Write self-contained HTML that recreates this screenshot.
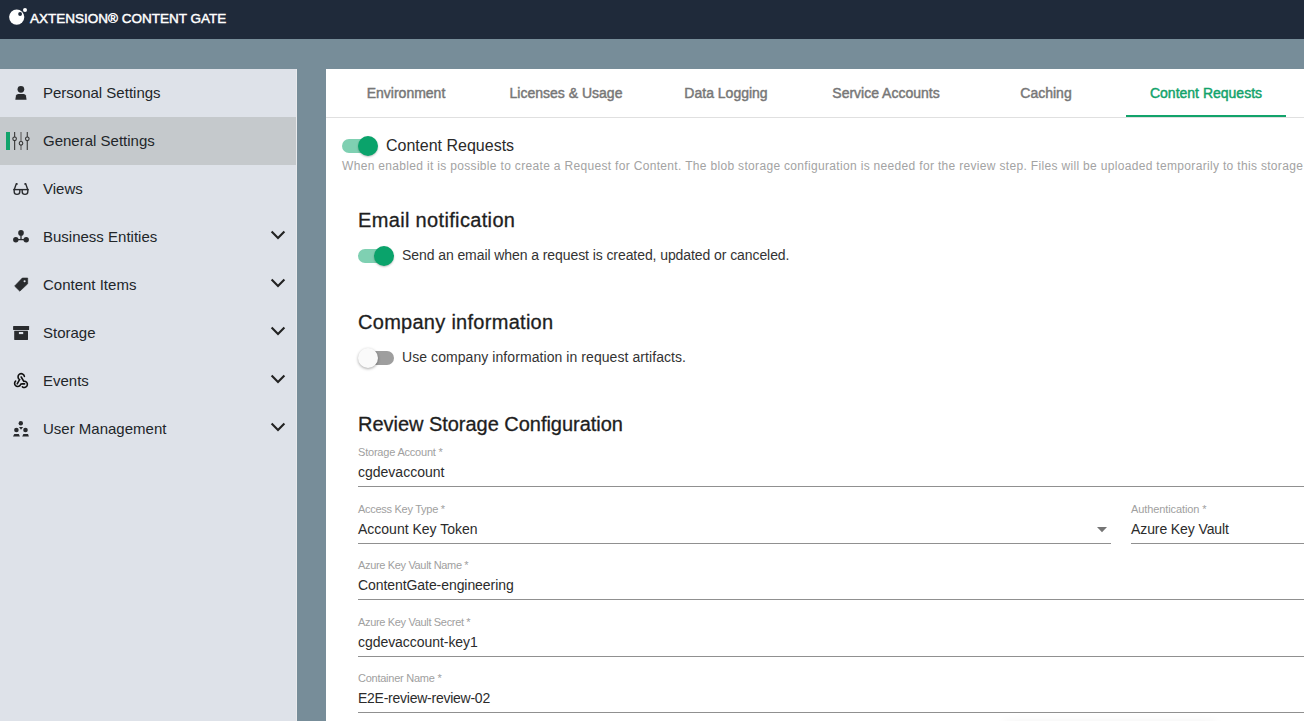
<!DOCTYPE html>
<html><head><meta charset="utf-8">
<style>
*{box-sizing:border-box;margin:0;padding:0}
html,body{width:1304px;height:721px;overflow:hidden;background:#778d99;font-family:"Liberation Sans",sans-serif}
.a{position:absolute;white-space:nowrap;line-height:1}
.b{position:absolute}
</style></head><body>
<div class="b" style="left:0;top:0;width:1304px;height:39px;background:#1f2a3a"></div>
<svg class="b" style="left:0;top:0" width="40" height="39" viewBox="0 0 40 39">
<circle cx="16.7" cy="17.1" r="7.6" fill="#fff"/><circle cx="20.1" cy="14" r="1.9" fill="#1f2a3a"/><circle cx="25" cy="9.9" r="2" fill="#fff"/></svg>
<div class="a" style="left:30px;top:11.97px;font-size:13.5px;color:#fff;-webkit-text-stroke:0.45px #fff">AXTENSION® CONTENT GATE</div>
<div class="b" style="left:0;top:69px;width:296px;height:652px;background:#dee2e9"></div>
<div class="b" style="left:296px;top:69px;width:1px;height:652px;background:#e9eaec"></div>
<div class="b" style="left:0;top:117px;width:296px;height:48px;background:#c5c9cc"></div>
<div class="b" style="left:6px;top:132px;width:4px;height:18px;background:#12a36b"></div>
<div class="a" style="left:43px;top:85.30px;font-size:15px;color:#22262a">Personal Settings</div>
<div class="a" style="left:43px;top:133.30px;font-size:15px;color:#22262a">General Settings</div>
<div class="a" style="left:43px;top:181.30px;font-size:15px;color:#22262a">Views</div>
<div class="a" style="left:43px;top:229.30px;font-size:15px;color:#22262a">Business Entities</div>
<div class="a" style="left:43px;top:277.30px;font-size:15px;color:#22262a">Content Items</div>
<div class="a" style="left:43px;top:325.30px;font-size:15px;color:#22262a">Storage</div>
<div class="a" style="left:43px;top:373.30px;font-size:15px;color:#22262a">Events</div>
<div class="a" style="left:43px;top:421.30px;font-size:15px;color:#22262a">User Management</div>
<svg class="b" style="left:268px;top:227px" width="20" height="16" viewBox="0 0 20 16"><path d="M3.6 4.6 L10 11 L16.4 4.6" fill="none" stroke="#222" stroke-width="2.1"/></svg>
<svg class="b" style="left:268px;top:275px" width="20" height="16" viewBox="0 0 20 16"><path d="M3.6 4.6 L10 11 L16.4 4.6" fill="none" stroke="#222" stroke-width="2.1"/></svg>
<svg class="b" style="left:268px;top:323px" width="20" height="16" viewBox="0 0 20 16"><path d="M3.6 4.6 L10 11 L16.4 4.6" fill="none" stroke="#222" stroke-width="2.1"/></svg>
<svg class="b" style="left:268px;top:371px" width="20" height="16" viewBox="0 0 20 16"><path d="M3.6 4.6 L10 11 L16.4 4.6" fill="none" stroke="#222" stroke-width="2.1"/></svg>
<svg class="b" style="left:268px;top:419px" width="20" height="16" viewBox="0 0 20 16"><path d="M3.6 4.6 L10 11 L16.4 4.6" fill="none" stroke="#222" stroke-width="2.1"/></svg>
<svg class="b" style="left:0;top:69px" width="40" height="380" viewBox="0 69 40 380">
<circle cx="20.9" cy="89.3" r="3.35" fill="#292b2e"/>
<path d="M15.3 99.8 L16 95.6 Q16.4 94 18.3 94 L23.6 94 Q25.4 94 25.9 95.6 L26.6 99.8 Z" fill="#292b2e"/>
<g stroke="#444" stroke-width="1.2" fill="none">
<line x1="14.6" y1="132" x2="14.6" y2="150"/><line x1="21" y1="132" x2="21" y2="150" stroke="#666"/><line x1="27.3" y1="132" x2="27.3" y2="150"/>
</g>
<g stroke="#333" stroke-width="1.1" fill="#c9cdd0">
<circle cx="14.6" cy="138.8" r="1.8"/><circle cx="21" cy="143.3" r="1.8"/><circle cx="27.3" cy="138.8" r="1.8"/>
</g>
<g fill="none" stroke="#292b2e" stroke-width="1.4" stroke-linejoin="round">
<path d="M13.2 189.6 H28.8"/>
<path d="M14.2 189.6 V191.8 Q14.2 194.4 17 194.4 Q19.8 194.4 19.8 191.8 V189.6"/>
<path d="M22.2 189.6 V191.8 Q22.2 194.4 25 194.4 Q27.8 194.4 27.8 191.8 V189.6"/>
<path d="M14.3 189.6 L16.4 183.6 L17.6 184.4"/>
<path d="M27.7 189.6 L25.6 183.6 L24.4 184.4"/>
</g>
<g fill="#292b2e">
<circle cx="21" cy="232.9" r="2.8"/><circle cx="15.8" cy="239.7" r="2.7"/><circle cx="26.2" cy="239.7" r="2.7"/>
</g>
<path d="M21 233 V239.7 M15.8 239.7 H26.2" stroke="#292b2e" stroke-width="1.3"/>
<path d="M22.3 278 L27.7 278 L27.7 283.8 L19.8 291.2 L14.6 286.1 Z" fill="#292b2e" stroke="#292b2e" stroke-width="0.6" stroke-linejoin="round"/>
<circle cx="24.6" cy="281.3" r="1.05" fill="#dee2e9"/>
<rect x="13.1" y="326" width="16" height="4" rx="0.5" fill="#292b2e"/>
<rect x="14.2" y="330.8" width="13.8" height="9.2" rx="0.4" fill="#292b2e"/>
<rect x="18.9" y="332" width="4.3" height="2.1" fill="#dee2e9"/>
<g fill="none" stroke="#111" stroke-width="1.6" stroke-linecap="round">
<path d="M24.4 376.4 A3.2 3.2 0 1 0 19.6 379.6 L17.2 383.9"/>
<path d="M21.2 377 L23.8 381.3 A3.1 3.1 0 1 1 22.4 386.8"/>
<path d="M15.6 381.1 A3.1 3.1 0 1 0 19.9 385.7 Q20.5 383.9 22 383.9 L24.6 383.9"/>
</g>
<g fill="#292b2e">
<circle cx="20.8" cy="423.3" r="2.2"/>
<path d="M19 427.1 L23.1 427.1 L21 429.7 Z"/>
<circle cx="16.4" cy="430" r="2.3"/><circle cx="25.5" cy="430" r="2.3"/>
<path d="M14.3 434.1 L18.8 434.1 L19.9 436.6 L13 436.6 Z"/>
<path d="M23.4 434.1 L28 434.1 L28.9 436.6 L22.2 436.6 Z"/>
</g>
</svg>
<div class="b" style="left:326px;top:69px;width:978px;height:652px;background:#fff"></div>
<div class="b" style="left:326px;top:117px;width:978px;height:1px;background:#e0e0e0"></div>
<div class="b" style="left:1126px;top:115px;width:160px;height:2px;background:#12a36b"></div>
<div class="a" style="left:326px;width:160px;text-align:center;top:86.15px;font-size:14px;color:#777;-webkit-text-stroke:0.45px #777">Environment</div>
<div class="a" style="left:486px;width:160px;text-align:center;top:86.15px;font-size:14px;color:#777;-webkit-text-stroke:0.45px #777">Licenses &amp; Usage</div>
<div class="a" style="left:646px;width:160px;text-align:center;top:86.15px;font-size:14px;color:#777;-webkit-text-stroke:0.45px #777">Data Logging</div>
<div class="a" style="left:806px;width:160px;text-align:center;top:86.15px;font-size:14px;color:#777;-webkit-text-stroke:0.45px #777">Service Accounts</div>
<div class="a" style="left:966px;width:160px;text-align:center;top:86.15px;font-size:14px;color:#777;-webkit-text-stroke:0.45px #777">Caching</div>
<div class="a" style="left:1126px;width:160px;text-align:center;top:86.15px;font-size:14px;color:#12a36b;-webkit-text-stroke:0.45px #12a36b">Content Requests</div>
<div class="b" style="left:342px;top:139px;width:34px;height:14px;border-radius:7px;background:#7fd0b2"></div>
<div class="b" style="left:358px;top:136px;width:20px;height:20px;border-radius:50%;background:#0aa36b;box-shadow:0 1px 2px rgba(0,0,0,.25)"></div>
<div class="a" style="left:386px;top:137.66px;font-size:16px;color:#2a2a2a">Content Requests</div>
<div class="a" style="left:342px;top:160.34px;font-size:12px;color:#a3a3a3;letter-spacing:0.325px">When enabled it is possible to create a Request for Content. The blob storage configuration is needed for the review step. Files will be uploaded temporarily to this storage account.</div>
<div class="a" style="left:358px;top:210.27px;font-size:20px;color:#1e1e1e;letter-spacing:0.34px;-webkit-text-stroke:0.3px #1e1e1e">Email notification</div>
<div class="b" style="left:358px;top:249px;width:34px;height:14px;border-radius:7px;background:#7fd0b2"></div>
<div class="b" style="left:374px;top:246px;width:20px;height:20px;border-radius:50%;background:#0aa36b;box-shadow:0 1px 2px rgba(0,0,0,.25)"></div>
<div class="a" style="left:402px;top:248.05px;font-size:14px;color:#333;letter-spacing:-0.08px">Send an email when a request is created, updated or canceled.</div>
<div class="a" style="left:358px;top:312.27px;font-size:20px;color:#1e1e1e;letter-spacing:0.28px;-webkit-text-stroke:0.3px #1e1e1e">Company information</div>
<div class="b" style="left:360px;top:351px;width:34px;height:14px;border-radius:7px;background:#9e9e9e"></div>
<div class="b" style="left:358px;top:348px;width:20px;height:20px;border-radius:50%;background:#fafafa;box-shadow:0 1px 3px rgba(0,0,0,.35)"></div>
<div class="a" style="left:402px;top:349.85px;font-size:14px;color:#333;letter-spacing:0.07px">Use company information in request artifacts.</div>
<div class="a" style="left:358px;top:414.27px;font-size:20px;color:#1e1e1e;letter-spacing:-0.03px;-webkit-text-stroke:0.3px #1e1e1e">Review Storage Configuration</div>
<div class="a" style="left:358px;top:447.29px;font-size:11px;color:#a0a0a0;letter-spacing:-0.2px">Storage Account *</div>
<div class="a" style="left:358px;top:464.75px;font-size:14px;color:#2b2b2b">cgdevaccount</div>
<div class="b" style="left:358px;top:486px;width:946px;height:1px;background:#909090"></div>
<div class="a" style="left:358px;top:503.89px;font-size:11px;color:#a0a0a0;letter-spacing:-0.28px">Access Key Type *</div>
<div class="a" style="left:358px;top:522.25px;font-size:14px;color:#2b2b2b">Account Key Token</div>
<div class="b" style="left:358px;top:543px;width:753px;height:1px;background:#909090"></div>
<div class="a" style="left:358px;top:560.19px;font-size:11px;color:#a0a0a0;letter-spacing:-0.34px">Azure Key Vault Name *</div>
<div class="a" style="left:358px;top:578.35px;font-size:14px;color:#2b2b2b;letter-spacing:-0.07px">ContentGate-engineering</div>
<div class="b" style="left:358px;top:599px;width:946px;height:1px;background:#909090"></div>
<div class="a" style="left:358px;top:617.39px;font-size:11px;color:#a0a0a0;letter-spacing:-0.33px">Azure Key Vault Secret *</div>
<div class="a" style="left:358px;top:634.85px;font-size:14px;color:#2b2b2b;letter-spacing:-0.05px">cgdevaccount-key1</div>
<div class="b" style="left:358px;top:656px;width:946px;height:1px;background:#909090"></div>
<div class="a" style="left:358px;top:673.39px;font-size:11px;color:#a0a0a0;letter-spacing:-0.25px">Container Name *</div>
<div class="a" style="left:358px;top:690.85px;font-size:14px;color:#2b2b2b;letter-spacing:-0.25px">E2E-review-review-02</div>
<div class="b" style="left:358px;top:712px;width:946px;height:1px;background:#909090"></div>
<div class="a" style="left:1131px;top:504.49px;font-size:11px;color:#a0a0a0;letter-spacing:-0.1px">Authentication *</div>
<div class="a" style="left:1131px;top:522.05px;font-size:14px;color:#2b2b2b;letter-spacing:-0.1px">Azure Key Vault</div>
<div class="b" style="left:1131px;top:543px;width:173px;height:1px;background:#909090"></div>
<svg class="b" style="left:1095px;top:525px" width="14" height="10" viewBox="0 0 14 10"><path d="M2 2 L12 2 L7 7.2 Z" fill="#757575"/></svg>
<div class="b" style="left:1006px;top:726px;width:208px;height:40px;border-radius:4px;box-shadow:0 0 12px 2px rgba(0,0,0,.09);background:#fff"></div>
</body></html>
